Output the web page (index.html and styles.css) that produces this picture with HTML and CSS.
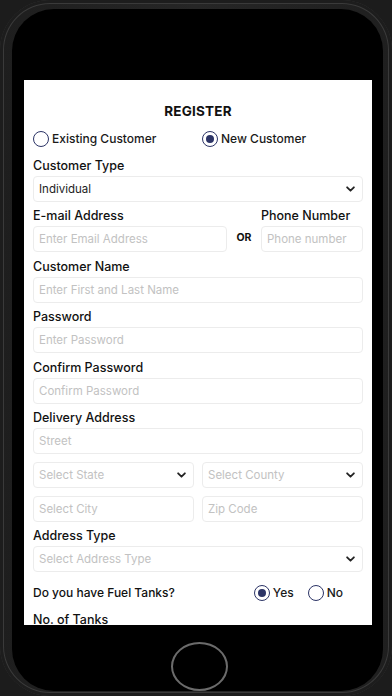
FILE: index.html
```html
<!DOCTYPE HTML>
<html lang="en">
  <head>
    <title>Register</title>
    <meta charset="UTF-8" name="viewport" content="width=device-width, initial-scale=1.0" />
    <link rel="stylesheet" href="styles.css">
  </head>
  <body>
    <div class="phone">
      <div class="bezel">
        <div class="screen">

          <h1 class="title">REGISTER</h1>

          <div class="pair radios">
            <label class="radio"><span class="dot"></span>Existing Customer</label>
            <label class="radio"><span class="dot on"></span>New Customer</label>
          </div>

          <div class="field">
            <div class="label">Customer Type</div>
            <div class="box select"><span class="value">Individual</span><svg class="chev" viewBox="0 0 8 5"><polyline points="1,1 4,4 7,1"/></svg></div>
          </div>

          <div class="contact">
            <div class="label">E-mail Address</div>
            <div></div>
            <div class="label">Phone Number</div>
            <div class="box"><span class="ph">Enter Email Address</span></div>
            <div class="or">OR</div>
            <div class="box"><span class="ph">Phone number</span></div>
          </div>

          <div class="field">
            <div class="label">Customer Name</div>
            <div class="box"><span class="ph">Enter First and Last Name</span></div>
          </div>

          <div class="field">
            <div class="label">Password</div>
            <div class="box"><span class="ph">Enter Password</span></div>
          </div>

          <div class="field">
            <div class="label">Confirm Password</div>
            <div class="box"><span class="ph">Confirm Password</span></div>
          </div>

          <div class="field address">
            <div class="label">Delivery Address</div>
            <div class="box"><span class="ph">Street</span></div>
            <div class="pair">
              <div class="box select"><span class="ph">Select State</span><svg class="chev" viewBox="0 0 8 5"><polyline points="1,1 4,4 7,1"/></svg></div>
              <div class="box select"><span class="ph">Select County</span><svg class="chev" viewBox="0 0 8 5"><polyline points="1,1 4,4 7,1"/></svg></div>
            </div>
            <div class="pair">
              <div class="box"><span class="ph">Select City</span></div>
              <div class="box"><span class="ph">Zip Code</span></div>
            </div>
          </div>

          <div class="field">
            <div class="label">Address Type</div>
            <div class="box select"><span class="ph">Select Address Type</span><svg class="chev" viewBox="0 0 8 5"><polyline points="1,1 4,4 7,1"/></svg></div>
          </div>

          <div class="tanks">
            <div class="question">Do you have Fuel Tanks?</div>
            <div class="options">
              <label class="radio"><span class="dot on"></span>Yes</label>
              <label class="radio"><span class="dot"></span>No</label>
            </div>
          </div>

          <div class="field">
            <div class="label">No. of Tanks</div>
          </div>

        </div>
        <div class="home"></div>
      </div>
    </div>
  </body>
</html>
```

FILE: styles.css
```css
      html, body {
        margin: 0;
        height: 696px;
        overflow: hidden;
        background: #1c1c1c;
        font-family: Inter, "Noto Sans", sans-serif;
      }

      .phone {
        box-sizing: border-box;
        height: 696px;
        padding: 9px 9px 5px 12px;
        border-radius: 50px;
        background: linear-gradient(90deg, #1e1e1e, #262626 50%, #1f1f1f);
        box-shadow: inset 0 0 0 3px #1d1d1d, inset 0 0 0 4px #3a3a3a;
      }

      .bezel {
        box-sizing: border-box;
        height: 100%;
        padding: 71px 11px 0 12px;
        background: #000;
        border-radius: 42px;
        display: flex;
        flex-direction: column;
      }

      .screen {
        height: 545px;
        background: #fff;
        overflow: hidden;
        padding: 0 9px;
        color: #111;
      }

      .home {
        align-self: center;
        width: 53px;
        height: 45px;
        margin: 17px 0 0 2px;
        border: 2px solid #6b6b6b;
        border-radius: 50%;
      }

      .title {
        margin: 21px 0 0 0;
        font-size: 13.5px;
        line-height: 20px;
        font-weight: 700;
        text-align: center;
        letter-spacing: 0.2px;
      }

      .pair {
        display: grid;
        grid-template-columns: 1fr 1fr;
        column-gap: 8px;
      }

      .radios {
        margin-top: 8px;
        height: 20px;
      }

      .radio {
        display: flex;
        align-items: center;
        gap: 3px;
        font-size: 12px;
        line-height: 20px;
        font-weight: 500;
        color: #1a1a1a;
      }

      .dot {
        box-sizing: border-box;
        width: 16px;
        height: 16px;
        border: 1.5px solid #2c3466;
        border-radius: 50%;
        display: flex;
        align-items: center;
        justify-content: center;
      }

      .dot.on::after {
        content: "";
        width: 8px;
        height: 8px;
        border-radius: 50%;
        background: #2c3466;
      }

      .field {
        margin-top: 8px;
      }

      .field + .field, .contact + .field {
        margin-top: 5.4px;
      }

      .label {
        font-size: 12.5px;
        line-height: 18px;
        font-weight: 500;
        margin-bottom: 1px;
      }

      .box {
        box-sizing: border-box;
        height: 26px;
        border: 1px solid #ececec;
        border-radius: 4px;
        padding: 0 7px 0 5px;
        display: flex;
        align-items: center;
        font-size: 11.5px;
      }

      .select {
        justify-content: space-between;
      }

      .value {
        color: #222;
      }

      .ph {
        color: #c2c2c2;
      }

      .chev {
        width: 9px;
        height: 6px;
        fill: none;
        stroke: #222;
        stroke-width: 1.6;
        stroke-linecap: round;
        stroke-linejoin: round;
      }

      .contact {
        margin-top: 5.4px;
        display: grid;
        grid-template-columns: 1fr 34px 102px;
      }

      .or {
        align-self: center;
        text-align: center;
        font-size: 10.5px;
        font-weight: 700;
        margin-top: -4px;
      }

      .address .pair {
        margin-top: 8px;
      }

      .tanks {
        margin-top: 10.5px;
        height: 20px;
        display: flex;
        align-items: center;
      }

      .question {
        flex: 1;
        font-size: 12px;
        font-weight: 500;
      }

      .options {
        display: flex;
        gap: 14px;
        margin-right: 20px;
      }

      .tanks + .field {
        margin-top: 8px;
      }
```
